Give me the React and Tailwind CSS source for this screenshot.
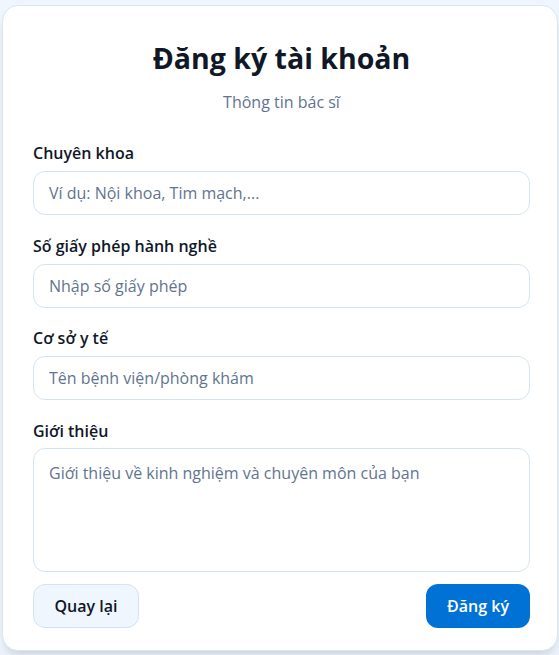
import React from 'react';

const fields = [
  { label: 'Chuyên khoa', placeholder: 'Ví dụ: Nội khoa, Tim mạch,...' },
  { label: 'Số giấy phép hành nghề', placeholder: 'Nhập số giấy phép' },
  { label: 'Cơ sở y tế', placeholder: 'Tên bệnh viện/phòng khám' },
];

export default function App() {
  return (
    <div className="min-h-screen bg-[#eff6fd] pl-[2px] pr-[1px] pt-[5px] font-['Open_Sans',sans-serif]">
      <div className="rounded-2xl border border-[#d9e6f5] bg-white pb-[22px] pl-[30px] pr-[27px] pt-[34px] shadow-lg">
        <h1 className="text-center text-[28.5px] font-bold leading-9 text-gray-900">Đăng ký tài khoản</h1>
        <p className="mt-[14px] text-center text-base leading-6 text-slate-500">Thông tin bác sĩ</p>

        <div className="mt-[27px] flex flex-col gap-[18.5px]">
          {fields.map((f) => (
            <div key={f.label} className="flex flex-col gap-1.5">
              <label className="text-base font-semibold leading-6 text-gray-900">{f.label}</label>
              <input
                className="h-11 rounded-xl border border-[#d4e3f3] px-[15px] text-base text-gray-900 outline-none placeholder:text-slate-500"
                placeholder={f.placeholder}
              />
            </div>
          ))}
          <div className="flex flex-col gap-[5px]">
            <label className="text-base font-semibold leading-6 text-gray-900">Giới thiệu</label>
            <textarea
              className="h-[124px] resize-none rounded-xl border border-[#d4e3f3] px-[15px] py-3 text-base leading-6 text-gray-900 outline-none placeholder:text-slate-500"
              placeholder="Giới thiệu về kinh nghiệm và chuyên môn của bạn"
            />
          </div>
        </div>

        <div className="mt-3 flex items-center justify-between">
          <button className="h-11 w-[106px] rounded-xl border border-[#d4e3f3] bg-[#eff6fd] text-base font-semibold text-gray-900">
            Quay lại
          </button>
          <button className="h-11 w-[104px] rounded-xl bg-[#0072d6] text-base font-semibold text-white">
            Đăng ký
          </button>
        </div>
      </div>
    </div>
  );
}
